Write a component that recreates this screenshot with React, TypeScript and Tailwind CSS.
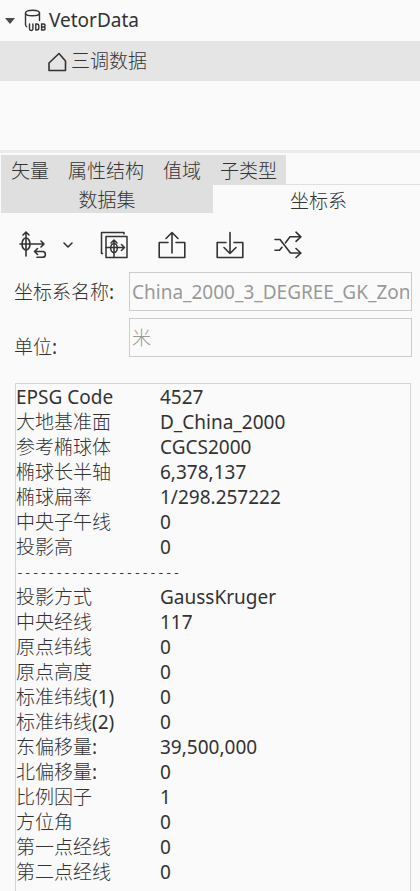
import { useState } from 'react';

interface Param {
  label: string;
  value: string;
}

const ELLIPSOID_PARAMS: Param[] = [
  { label: 'EPSG Code', value: '4527' },
  { label: '大地基准面', value: 'D_China_2000' },
  { label: '参考椭球体', value: 'CGCS2000' },
  { label: '椭球长半轴', value: '6,378,137' },
  { label: '椭球扁率', value: '1/298.257222' },
  { label: '中央子午线', value: '0' },
  { label: '投影高', value: '0' },
];

const PROJECTION_PARAMS: Param[] = [
  { label: '投影方式', value: 'GaussKruger' },
  { label: '中央经线', value: '117' },
  { label: '原点纬线', value: '0' },
  { label: '原点高度', value: '0' },
  { label: '标准纬线(1)', value: '0' },
  { label: '标准纬线(2)', value: '0' },
  { label: '东偏移量:', value: '39,500,000' },
  { label: '北偏移量:', value: '0' },
  { label: '比例因子', value: '1' },
  { label: '方位角', value: '0' },
  { label: '第一点经线', value: '0' },
  { label: '第二点经线', value: '0' },
];

const UPPER_TABS = ['矢量', '属性结构', '值域', '子类型'];

const iconProps = {
  fill: 'none',
  stroke: 'currentColor',
  strokeWidth: 1.6,
  strokeLinecap: 'round' as const,
  strokeLinejoin: 'round' as const,
  'aria-hidden': true,
};

function DatabaseIcon() {
  return (
    <svg {...iconProps} strokeWidth={1.4} className="h-6 w-6 shrink-0" viewBox="0 0 24 24">
      <ellipse cx="8.5" cy="4" rx="7" ry="2.8" />
      <path d="M1.5 4v11.5c0 1 .5 1.7 1.2 2.2M15.5 4v7.5" />
      {/* UDB badge */}
      <path d="M5.5 15v4.8a1.6 1.6 0 0 0 3.4 0V15M11.8 15v6h1a2 2 0 0 0 2-2v-2a2 2 0 0 0-2-2zM17.6 15v6h2a1.5 1.5 0 0 0 0-3 1.5 1.5 0 0 0 0-3zM17.6 18h2" />
    </svg>
  );
}

function PolygonIcon() {
  return (
    <svg {...iconProps} className="h-5 w-5 shrink-0" viewBox="0 0 20 20">
      <path d="M11 1.5 1 11v7.5h16.5V9z" />
    </svg>
  );
}

function ReprojectIcon() {
  return (
    <svg {...iconProps} className="h-7 w-7" viewBox="0 0 28 28">
      <path d="M7 25V1.5M4 4 7 1l3 3M1 13h24M22 10l3 3-3 3" />
      <ellipse cx="7" cy="13" rx="4" ry="6" />
      <path d="m18.5 17.5-3 3 3 3M15.5 20.5h8a2.9 2.9 0 0 1 0 5.8H18" />
    </svg>
  );
}

function CopyProjectionIcon() {
  return (
    <svg {...iconProps} strokeWidth={1.5} className="h-7 w-7" viewBox="0 0 28 28">
      <path d="M2.5 22.5h-1v-21H24V3" />
      <path d="M6 5.5h21v21H6z" />
      <path d="M14 26V9.5M11 12l3-3 3 3M6 16.5h18M21.5 13.5l3 3-3 3" />
      <ellipse cx="14" cy="17" rx="3.3" ry="4.5" />
    </svg>
  );
}

function ExportIcon() {
  return (
    <svg {...iconProps} className="h-7 w-7" viewBox="0 0 28 28">
      <path d="M10 11.5H1.2v15h25.6v-15H18" />
      <path d="M14 22V1.5M8 7.5l6-6 6 6" />
    </svg>
  );
}

function ImportIcon() {
  return (
    <svg {...iconProps} className="h-7 w-7" viewBox="0 0 28 28">
      <path d="M10 11.5H1.2v15h25.6v-15H18" />
      <path d="M14 1.5v21M8 16.5l6 6 6-6" />
    </svg>
  );
}

function ShuffleIcon() {
  return (
    <svg {...iconProps} className="h-7 w-7" viewBox="0 0 28 28">
      <path d="M1 8.5h5L16.5 22h10M1 19.3h4.5l2.5-3M11.5 11.8 16 5.8h10.5" />
      <path d="m22 1.2 4.8 4.6-4.8 4.5M22 17.5l4.8 4.5-4.8 4.5" />
    </svg>
  );
}

function ParamRow({ label, value }: Param) {
  return (
    <tr className="h-[25px]">
      <th scope="row" className="w-36 p-0 text-left font-normal">{label}</th>
      <td className="p-0">{value}</td>
    </tr>
  );
}

export default function App() {
  const [activeTab, setActiveTab] = useState('坐标系');

  return (
    <div className="flex min-h-screen flex-col bg-[#fafafa] font-['Noto_Sans','Noto_Sans_CJK_SC_Light','Noto_Sans_CJK_SC',sans-serif] text-[19px] leading-[25px] text-[#333]">
      <ul className="h-[150px]">
        <li>
          <button className="flex h-[41px] w-full items-center gap-1 pl-[5px] text-left">
            <svg className="h-[6px] w-[10px] shrink-0" viewBox="0 0 10 6" aria-hidden="true">
              <path d="M0 0h10L5 6z" fill="#4a4a4a" />
            </svg>
            <span className="flex items-center gap-px pl-[5px]">
              <DatabaseIcon />
              VetorData
            </span>
          </button>
          <ul>
            <li>
              <button className="flex h-10 w-full items-center gap-[3px] bg-[#e5e5e5] pt-px pl-12 text-left">
                <PolygonIcon />
                三调数据
              </button>
            </li>
          </ul>
        </li>
      </ul>
      <hr className="mb-[2px] h-[3px] border-0 bg-[#ebebeb]" />

      <nav className="pl-px">
        <div className="flex">
          <div className="flex gap-[19px] bg-[#dfdfdf] pr-[9px] pl-[10px]">
            {UPPER_TABS.map(tab => (
              <button key={tab} onClick={() => setActiveTab(tab)} className="h-[29px] pt-1">
                {tab}
              </button>
            ))}
          </div>
        </div>
        <div className="flex h-[29px]">
          <button onClick={() => setActiveTab('数据集')} className="w-[212px] bg-[#dfdfdf] pt-1">
            数据集
          </button>
          <button onClick={() => setActiveTab('坐标系')} aria-pressed={activeTab === '坐标系'} className="flex-1 border-t border-[#dfdfdf] pt-1 pl-1">
            坐标系
          </button>
        </div>
      </nav>

      <div className="flex h-[59px] items-center pt-1 pl-[19px]">
        <button aria-label="重投影"><ReprojectIcon /></button>
        <button aria-label="更多" className="ml-4 mr-[27px]">
          <svg {...iconProps} className="h-[6px] w-[10px]" viewBox="0 0 10 6">
            <path d="m1 1 4 4 4-4" />
          </svg>
        </button>
        <div className="flex gap-[30px]">
          <button aria-label="复制"><CopyProjectionIcon /></button>
          <button aria-label="导出"><ExportIcon /></button>
          <button aria-label="导入"><ImportIcon /></button>
          <button aria-label="转换"><ShuffleIcon /></button>
        </div>
      </div>

      <form className="flex flex-col gap-[7px] pr-2 pl-[14px]">
        <div className="flex items-center">
          <label htmlFor="crs-name" className="w-[115px] shrink-0 pt-[2px]">坐标系名称:</label>
          <div className="flex h-[39px] min-w-0 flex-1 border border-[#ccc] px-[2px] pt-[2px]">
            <input id="crs-name" disabled defaultValue="China_2000_3_DEGREE_GK_Zone" className="w-full text-[#999]" />
          </div>
        </div>
        <div className="flex items-end">
          <label htmlFor="crs-unit" className="w-[115px] shrink-0 leading-5">单位:</label>
          <div className="flex h-[39px] min-w-0 flex-1 border border-[#ccc] px-[2px] pt-[2px]">
            <input id="crs-unit" disabled defaultValue="米" className="w-full text-[#999]" />
          </div>
        </div>
      </form>

      <div className="mt-[26px] mr-[9px] ml-[15px] flex-1 border border-b-0 border-[#d5d5d5]">
        <table className="mt-px w-full border-collapse">
          <tbody>
            {ELLIPSOID_PARAMS.map(p => <ParamRow key={p.label} {...p} />)}
            <tr className="h-[25px]">
              <td colSpan={2} className="p-0 font-['DejaVu_Sans_Mono',monospace] text-[13px]">---------------------</td>
            </tr>
            {PROJECTION_PARAMS.map(p => <ParamRow key={p.label} {...p} />)}
          </tbody>
        </table>
      </div>
    </div>
  );
}
